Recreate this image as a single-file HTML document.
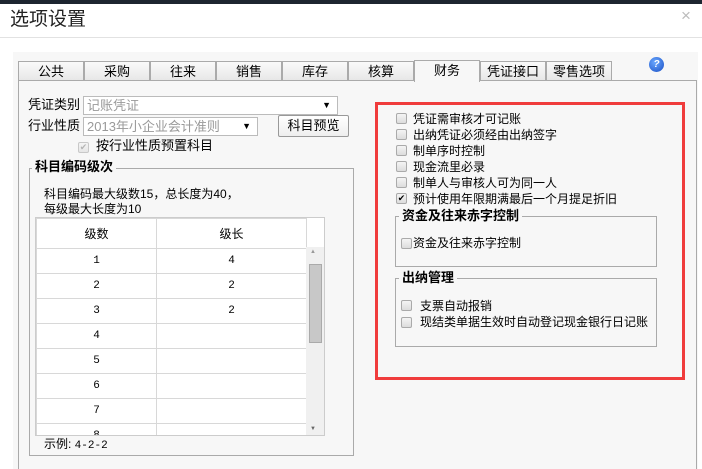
<!DOCTYPE html>
<html><head><meta charset="utf-8"><style>
*{margin:0;padding:0;box-sizing:border-box}
body{width:702px;height:469px;overflow:hidden;background:#fff;font-family:"Liberation Sans","Noto Sans CJK SC","WenQuanYi Zen Hei",sans-serif;font-size:12px;color:#000;position:relative}
.a{position:absolute}
.cb{position:absolute;width:11px;height:11px;border:1px solid #aaa;border-radius:2px;background:linear-gradient(#f4f4f4,#dcdcdc)}
.t{position:absolute;white-space:nowrap;line-height:14px;font-size:12px}
.tab{position:absolute;top:61px;height:20px;border:1px solid #aaa;border-bottom:none;background:linear-gradient(#fafafa,#e6e6e6);text-align:center;line-height:19px;font-size:13px;white-space:nowrap;width:66px}
.grp{position:absolute;border:1px solid #aaa}
.gt{position:absolute;background:#f7f7f7;font-weight:bold;font-size:13px;padding:0 3px;line-height:14px;white-space:nowrap}
td{border:1px solid #d8d8d8;text-align:center;height:25px;font-family:"Liberation Mono",monospace;font-size:11px}
</style></head><body>
<div class="a" style="left:0;top:0;width:702px;height:4px;background:#1d2530"></div>
<div class="t" style="left:10px;top:9px;font-size:19px;line-height:22px;color:#222">选项设置</div>
<div class="t" style="left:681px;top:9px;font-size:17px;color:#bbb">×</div>
<div class="a" style="left:0;top:37px;width:702px;height:1px;background:#e2e2e2"></div>
<div class="a" style="left:13px;top:52px;width:685px;height:417px;background:#f7f7f7"></div>
<div class="tab" style="left:18px">公共</div>
<div class="tab" style="left:84px">采购</div>
<div class="tab" style="left:150px">往来</div>
<div class="tab" style="left:216px">销售</div>
<div class="tab" style="left:282px">库存</div>
<div class="tab" style="left:348px">核算</div>
<div class="tab" style="left:414px;top:60px;height:22px;background:#f7f7f7;z-index:2">财务</div>
<div class="tab" style="left:480px">凭证接口</div>
<div class="tab" style="left:546px">零售选项</div>
<div class="a" style="left:649px;top:57px;width:15px;height:15px;border-radius:50%;background:radial-gradient(circle at 40% 35%,#6aa8ff,#1a4fc4);color:#fff;font-size:10px;font-weight:bold;text-align:center;line-height:15px;font-style:italic">?</div>
<div class="a" style="left:18px;top:80px;width:679px;height:389px;border:1px solid #aaa;border-bottom:none"></div>
<div class="t" style="left:28px;top:98px;font-size:13px">凭证类别</div>
<div class="a" style="left:83px;top:96px;width:255px;height:19px;border:1px solid #bbb;background:#fff;color:#999;font-size:13px;line-height:17px;padding-left:3px;white-space:nowrap">记账凭证<span style="position:absolute;right:6px;color:#000;font-size:9px">▼</span></div>
<div class="t" style="left:28px;top:119px;font-size:13px">行业性质</div>
<div class="a" style="left:83px;top:117px;width:175px;height:19px;border:1px solid #bbb;background:#fff;color:#999;font-size:13px;line-height:17px;padding-left:3px;white-space:nowrap">2013年小企业会计准则<span style="position:absolute;right:6px;color:#000;font-size:9px">▼</span></div>
<div class="a" style="left:278px;top:115px;width:71px;height:22px;border:1px solid #999;border-radius:2px;background:linear-gradient(#fff,#eee);font-size:13px;text-align:center;line-height:20px;white-space:nowrap">科目预览</div>
<div class="cb" style="left:78px;top:142px;opacity:.6;font-size:9px;line-height:9px;color:#888;text-align:center">✔</div>
<div class="t" style="left:96px;top:139px;font-size:13px">按行业性质预置科目</div>
<div class="grp" style="left:29px;top:168px;width:325px;height:288px"></div>
<div class="gt" style="left:32px;top:160px">科目编码级次</div>
<div class="t" style="left:44px;top:187px">科目编码最大级数15，总长度为40，</div>
<div class="t" style="left:44px;top:202px">每级最大长度为10</div>
<div class="a" style="left:35px;top:217px;width:290px;height:219px;background:#fff;border:1px solid #ccc;overflow:hidden">
<table style="border-collapse:collapse;width:271px;position:absolute;left:0;top:0">
<tr><td style="height:30px;width:120px;font-family:inherit;font-size:12px">级数</td><td style="font-family:inherit;font-size:12px">级长</td></tr>
<tr><td>1</td><td>4</td></tr><tr><td>2</td><td>2</td></tr><tr><td>3</td><td>2</td></tr><tr><td>4</td><td></td></tr><tr><td>5</td><td></td></tr><tr><td>6</td><td></td></tr><tr><td>7</td><td></td></tr><tr><td>8</td><td></td></tr>
</table>
<div class="a" style="left:270px;top:29px;width:18px;height:189px;background:#f0f0f0"></div>
<div class="a" style="left:274px;top:31px;font-size:6px;color:#999">▲</div>
<div class="a" style="left:274px;top:208px;font-size:6px;color:#666">▼</div>
<div class="a" style="left:273px;top:46px;width:13px;height:79px;background:#c8c8c8;border:1px solid #aaa"></div>
</div>
<div class="t" style="left:44px;top:437px">示例: <span style="font-family:'Liberation Mono',monospace;font-size:11px">4-2-2</span></div>
<div class="a" style="left:375px;top:102px;width:310px;height:278px;border:3px solid #f03c3c"></div>
<div class="cb" style="left:396px;top:113px"></div><div class="t" style="left:413px;top:112px">凭证需审核才可记账</div>
<div class="cb" style="left:396px;top:129px"></div><div class="t" style="left:413px;top:128px">出纳凭证必须经由出纳签字</div>
<div class="cb" style="left:396px;top:145px"></div><div class="t" style="left:413px;top:144px">制单序时控制</div>
<div class="cb" style="left:396px;top:161px"></div><div class="t" style="left:413px;top:160px">现金流里必录</div>
<div class="cb" style="left:396px;top:177px"></div><div class="t" style="left:413px;top:176px">制单人与审核人可为同一人</div>
<div class="cb" style="left:396px;top:193px;font-size:9px;line-height:9px;text-align:center">✔</div><div class="t" style="left:413px;top:192px">预计使用年限期满最后一个月提足折旧</div>
<div class="grp" style="left:395px;top:216px;width:262px;height:51px"></div>
<div class="gt" style="left:399px;top:209px">资金及往来赤字控制</div>
<div class="cb" style="left:401px;top:238px"></div><div class="t" style="left:413px;top:236px">资金及往来赤字控制</div>
<div class="grp" style="left:395px;top:278px;width:262px;height:69px"></div>
<div class="gt" style="left:399px;top:271px">出纳管理</div>
<div class="cb" style="left:401px;top:300px"></div><div class="t" style="left:420px;top:299px">支票自动报销</div>
<div class="cb" style="left:401px;top:317px"></div><div class="t" style="left:420px;top:315px">现结类单据生效时自动登记现金银行日记账</div>
</body></html>
